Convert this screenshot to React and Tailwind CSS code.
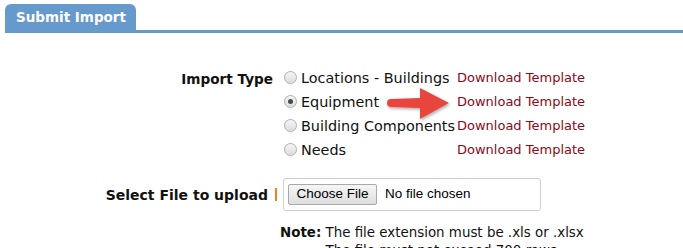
import React from "react";

const options = [
  { label: "Locations - Buildings", checked: false },
  { label: "Equipment", checked: true },
  { label: "Building Components", checked: false },
  { label: "Needs", checked: false },
];

function Radio({ checked }) {
  return (
    <span className="relative inline-flex h-[13px] w-[13px] shrink-0 items-center justify-center rounded-full border border-[#b0b0b0] bg-gradient-to-b from-[#f6f6f6] to-[#dedede]">
      {checked && <span className="h-[5px] w-[5px] rounded-full bg-[#4a4a4a]" />}
    </span>
  );
}

export default function App() {
  return (
    <div className="relative h-[248px] w-[683px] overflow-hidden bg-white font-['Verdana','DejaVu_Sans',sans-serif] text-[13px] text-[#111]">
      <div className="pl-[5px] pt-[4px]">
        <div className="flex h-[26px] w-[131px] items-center rounded-t-[6px] bg-[#6699cc] pl-[11px] text-[13.5px] font-bold text-white">
          Submit Import
        </div>
        <div className="h-[3px] w-full bg-[#6699cc]" />
      </div>

      <div className="mt-[36px] flex">
        <div className="w-[273px] pt-[2px] text-right text-[13.6px] font-bold leading-[16px]">Import Type</div>
        <div className="ml-[11px] flex flex-col">
          {options.map((o, i) => (
            <div key={i} className="flex h-[24px] items-start">
              <div className="flex w-[173px] items-center">
                <Radio checked={o.checked} />
                <span className="ml-[4px] whitespace-nowrap pt-[1px] text-[14.4px] leading-[16px] text-[#111]">{o.label}</span>
              </div>
              <span className="whitespace-nowrap pt-[1px] leading-[16px] text-[#8b0a1a]">Download Template</span>
            </div>
          ))}
        </div>
      </div>

      <div className="mt-[13px] flex items-center">
        <div className="w-[268px] text-right text-[14px] font-bold leading-[18px]">Select File to upload</div>
        <div className="ml-[7px] h-[13px] w-[2px] bg-[#f08020]" />
        <div className="ml-[6px] flex h-[33px] w-[258px] items-center rounded-[3px] border border-[#cfcfcf] pl-[4px]">
          <span className="flex h-[21px] w-[89px] items-center justify-center rounded-[2px] border border-[#a9a9a9] bg-gradient-to-b from-[#f6f6f6] to-[#dedede] font-['Liberation_Sans',Arial,sans-serif] text-[13.5px] text-black">
            Choose File
          </span>
          <span className="ml-[8px] font-['Liberation_Sans',Arial,sans-serif] text-[13.5px] text-black">No file chosen</span>
        </div>
      </div>

      <div className="mt-[13px] flex pl-[280px] text-[13.4px] leading-[18px]">
        <span className="font-bold">Note:</span>
        <span>&nbsp;</span>
        <div className="flex flex-col">
          <span className="whitespace-nowrap">The file extension must be .xls or .xlsx</span>
          <span className="whitespace-nowrap">The file must not exceed 700 rows.</span>
        </div>
      </div>

      <svg className="absolute left-[384px] top-[86px]" width="70" height="38" viewBox="0 0 70 38">
        <defs>
          <filter id="sh" x="-20%" y="-30%" width="140%" height="160%">
            <feDropShadow dx="1" dy="1.5" stdDeviation="1.5" floodColor="#000" floodOpacity="0.35" />
          </filter>
        </defs>
        <g filter="url(#sh)">
          <path d="M7 13 L36 12 L36 2 L65 17 L36 33 L36 22 L7 21 A4 4 0 0 1 7 13 Z" fill="#e8453c" />
        </g>
      </svg>
    </div>
  );
}
